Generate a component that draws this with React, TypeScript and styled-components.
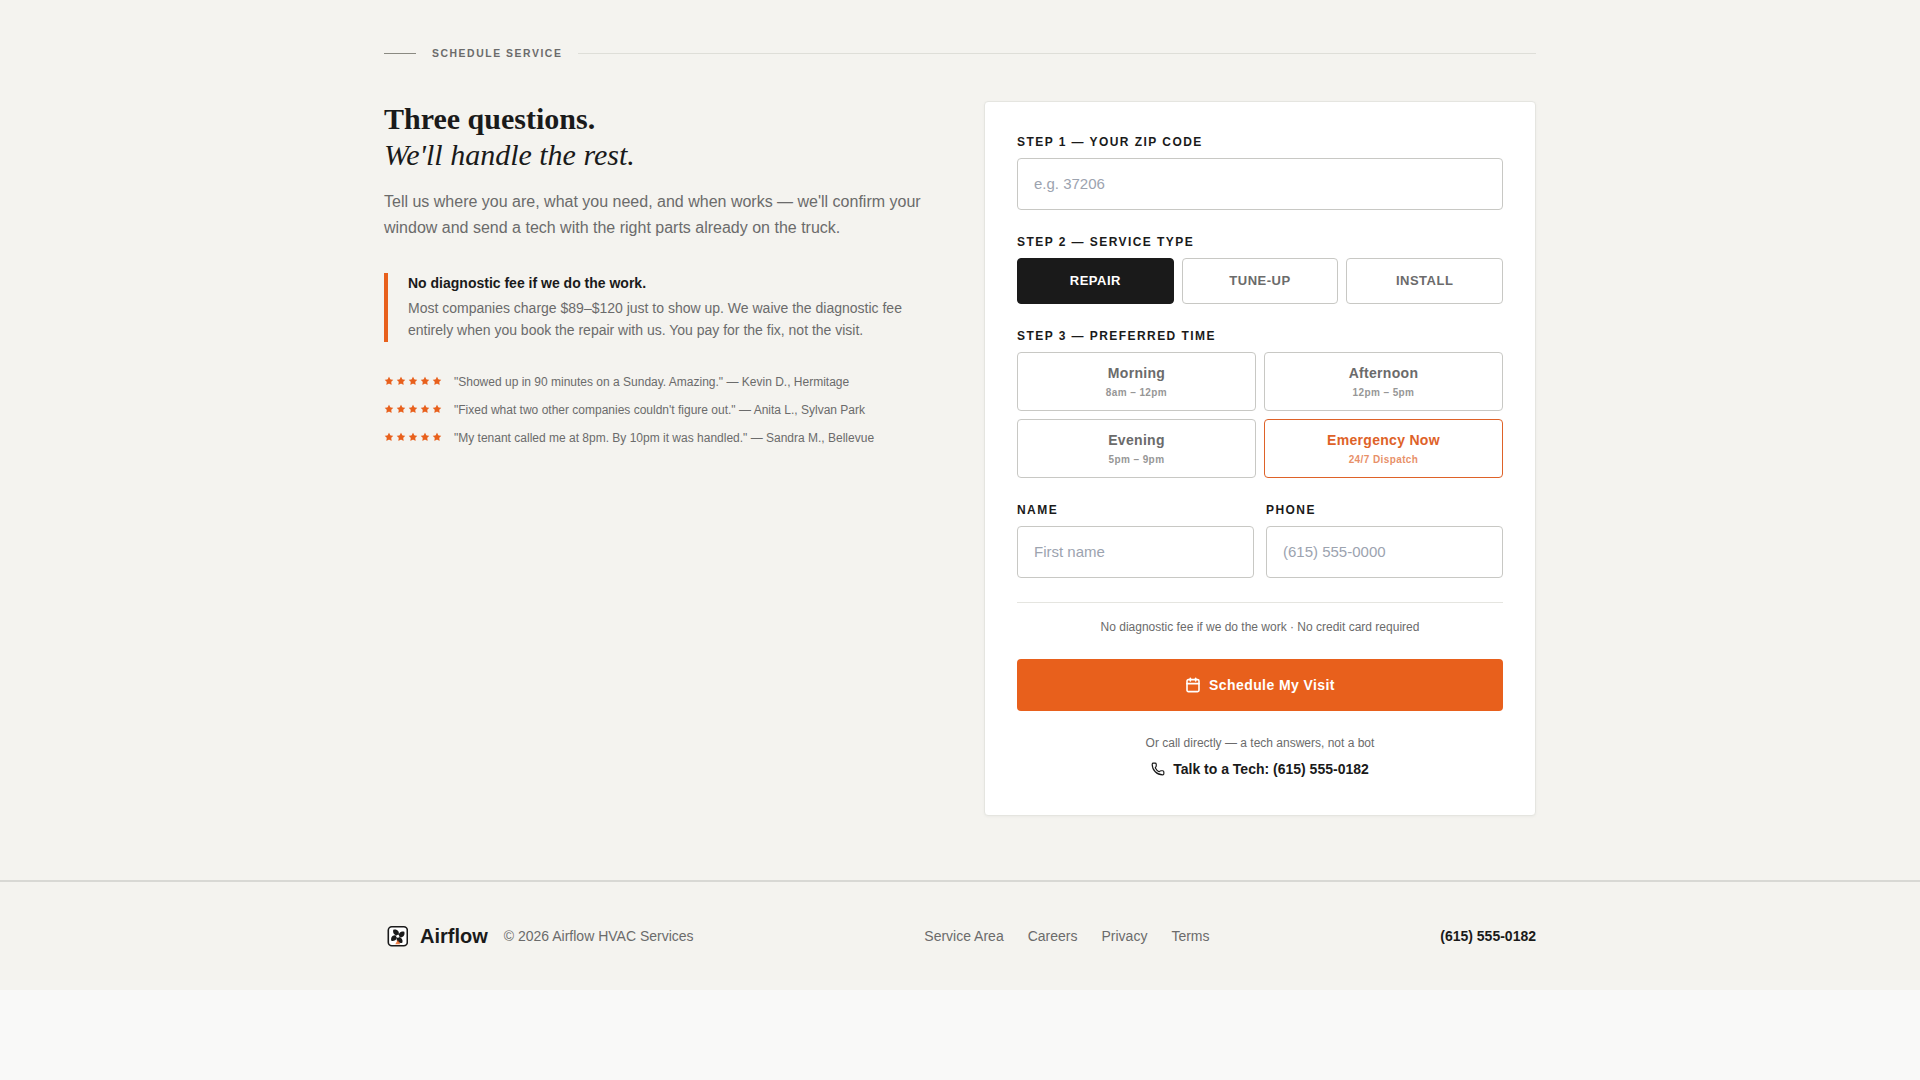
import React, { useState } from "react";
import styled, { createGlobalStyle } from "styled-components";
import { Calendar, Phone, Star } from "lucide-react";

const GlobalStyle = createGlobalStyle`
  * {
    box-sizing: border-box;
  }
  body {
    margin: 0;
    background: #f9f9f8;
    font-family: "Liberation Sans", Arial, sans-serif;
    color: #1a1a1a;
  }
`;

const Page = styled.div`
  background: #f4f3ef;
`;

const Section = styled.section`
  max-width: 1280px;
  margin: 0 auto;
  padding: 46px 64px 64px;
`;

const Eyebrow = styled.div`
  display: flex;
  align-items: center;
  gap: 16px;
  margin-bottom: 40px;
  font-size: 10.4px;
  font-weight: 700;
  letter-spacing: 1.56px;
  color: #6b6b6b;
  line-height: 15px;
  &::before {
    content: "";
    width: 32px;
    height: 1px;
    background: #8a8a82;
  }
  &::after {
    content: "";
    flex: 1;
    height: 1px;
    background: #deded8;
  }
`;

const Columns = styled.div`
  display: grid;
  grid-template-columns: 1fr 1fr;
  gap: 48px;
  align-items: start;
`;

const Heading = styled.h2`
  margin: 0 0 16px;
  font-family: "Liberation Serif", "Times New Roman", serif;
  font-size: 30px;
  font-weight: 700;
  line-height: 36px;
  color: #1a1a1a;
  em {
    display: block;
    font-weight: 400;
    font-style: italic;
  }
`;

const Lead = styled.p`
  margin: 0 0 32px;
  font-size: 16px;
  line-height: 26px;
  color: #6b6b6b;
`;

const Callout = styled.div`
  border-left: 4px solid #e8601c;
  padding: 0 0 1px 20px;
  margin-bottom: 32px;
`;

const CalloutTitle = styled.div`
  margin-bottom: 4px;
  font-size: 14px;
  font-weight: 700;
  line-height: 20px;
  color: #1a1a1a;
`;

const CalloutText = styled.p`
  margin: 0;
  font-size: 14px;
  line-height: 22px;
  color: #6b6b6b;
`;

const Reviews = styled.div`
  display: flex;
  flex-direction: column;
  gap: 12px;
`;

const Review = styled.div`
  display: flex;
  align-items: center;
  gap: 12px;
  font-size: 12px;
  line-height: 16px;
  color: #6b6b6b;
`;

const Stars = styled.span`
  display: flex;
  gap: 2px;
  margin-bottom: 2px;
  color: #e8601c;
`;

const Card = styled.form`
  background: #fff;
  border: 1px solid #e5e5e0;
  border-radius: 4px;
  padding: 32px;
  box-shadow: 0 1px 3px rgba(0, 0, 0, 0.04);
`;

const Step = styled.div`
  margin-bottom: 24px;
`;

const Label = styled.label`
  display: block;
  padding-top: 1px;
  margin-bottom: 9px;
  font-size: 12px;
  font-weight: 700;
  line-height: 14px;
  letter-spacing: 1.44px;
  color: #1a1a1a;
`;

const Input = styled.input`
  display: block;
  width: 100%;
  height: 52px;
  padding: 0 16px 2px;
  border: 1px solid #c8c8c4;
  border-radius: 4px;
  background: #fff;
  font-family: inherit;
  font-size: 15px;
  color: #1a1a1a;
  outline: none;
  &::placeholder {
    color: #9ca3af;
  }
`;

const ServiceRow = styled.div`
  display: grid;
  grid-template-columns: repeat(3, 1fr);
  gap: 8px;
`;

const ServiceButton = styled.button<{ $active?: boolean }>`
  height: 46px;
  padding: 0 0 2px;
  border: 1px solid ${({ $active }) => ($active ? "#1a1a1a" : "#c8c8c4")};
  border-radius: 4px;
  background: ${({ $active }) => ($active ? "#1a1a1a" : "#fff")};
  color: ${({ $active }) => ($active ? "#fff" : "#6b6b6b")};
  font-family: inherit;
  font-size: 13px;
  font-weight: 700;
  letter-spacing: 0.5px;
  cursor: pointer;
`;

const TimeGrid = styled.div`
  display: grid;
  grid-template-columns: 1fr 1fr;
  gap: 8px;
`;

const TimeButton = styled.button<{ $urgent?: boolean }>`
  display: flex;
  flex-direction: column;
  align-items: center;
  justify-content: center;
  gap: 4px;
  height: 59px;
  border: 1px solid ${({ $urgent }) => ($urgent ? "#de6228" : "#c8c8c4")};
  border-radius: 4px;
  background: #fff;
  color: ${({ $urgent }) => ($urgent ? "#de6228" : "#6b6b6b")};
  font-family: inherit;
  cursor: pointer;
`;

const TimeName = styled.span`
  font-size: 14px;
  font-weight: 700;
  line-height: 18px;
  letter-spacing: 0.3px;
`;

const TimeHours = styled.span`
  font-size: 10px;
  font-weight: 700;
  line-height: 14px;
  letter-spacing: 0.4px;
  opacity: 0.7;
`;

const ContactRow = styled.div`
  display: grid;
  grid-template-columns: 1fr 1fr;
  gap: 12px;
  padding-bottom: 24px;
  margin-bottom: 12px;
  border-bottom: 1px solid #e5e5e0;
`;

const Note = styled.p`
  margin: 0 0 20px;
  text-align: center;
  font-size: 12px;
  line-height: 24px;
  color: #6b6b6b;
`;

const Submit = styled.button`
  display: flex;
  align-items: center;
  justify-content: center;
  gap: 8px;
  width: 100%;
  height: 52px;
  border: none;
  border-radius: 4px;
  background: #e8601c;
  color: #fff;
  font-family: inherit;
  font-size: 14px;
  font-weight: 700;
  letter-spacing: 0.42px;
  cursor: pointer;
`;

const CallHint = styled.p`
  margin: 24px 0 0;
  text-align: center;
  font-size: 12px;
  line-height: 16px;
  color: #6b6b6b;
`;

const CallLink = styled.a`
  display: flex;
  align-items: center;
  justify-content: center;
  gap: 8px;
  margin-top: 9px;
  padding-bottom: 5px;
  font-size: 14px;
  font-weight: 700;
  line-height: 18px;
  color: #1a1a1a;
  text-decoration: none;
`;

const Footer = styled.footer`
  border-top: 2px solid #d8d8d4;
`;

const FooterInner = styled.div`
  display: flex;
  align-items: center;
  justify-content: space-between;
  max-width: 1280px;
  height: 108px;
  margin: 0 auto;
  padding: 0 64px;
`;

const Brand = styled.div`
  display: flex;
  align-items: center;
  gap: 16px;
`;

const LogoName = styled.div`
  display: flex;
  align-items: center;
  gap: 12px;
  font-size: 20px;
  font-weight: 700;
  color: #1a1a1a;
`;

const Copyright = styled.span`
  font-size: 14px;
  color: #6b6b6b;
`;

const FooterLinks = styled.nav`
  display: flex;
  gap: 24px;
`;

const FooterLink = styled.a`
  font-size: 14px;
  color: #6b6b6b;
  text-decoration: none;
`;

const FooterPhone = styled.a`
  font-size: 14px;
  font-weight: 700;
  color: #1a1a1a;
  text-decoration: none;
`;

const blade = "M12.500 11.500C9 11.500 6.500 9 7.500 5.500 11 4.500 14.500 7 12.500 11.500z";

const Logo = () => (
  <svg width="24" height="24" viewBox="0 0 24 24" aria-hidden="true">
    <rect x="4.300" y="2.800" width="19" height="19" rx="3.500" fill="#fff" stroke="#1a1a1a" strokeWidth="1.600" />
    <g transform="translate(1.800 0.300)" fill="#1a1a1a">
      {[0, 90, 180, 270].map((angle) => (
        <path key={angle} d={blade} transform={`rotate(${angle} 12 12)`} />
      ))}
      <circle cx="12" cy="12" r="1.500" fill="#fff" />
      <path d="M12 15.500l2.500 4.500h-5z" fill="#e8601c" opacity="0.8" />
    </g>
  </svg>
);

const services = ["REPAIR", "TUNE-UP", "INSTALL"];

const times = [
  { name: "Morning", hours: "8am – 12pm" },
  { name: "Afternoon", hours: "12pm – 5pm" },
  { name: "Evening", hours: "5pm – 9pm" },
  { name: "Emergency Now", hours: "24/7 Dispatch", urgent: true },
];

const reviews = [
  "\"Showed up in 90 minutes on a Sunday. Amazing.\" — Kevin D., Hermitage",
  "\"Fixed what two other companies couldn't figure out.\" — Anita L., Sylvan Park",
  "\"My tenant called me at 8pm. By 10pm it was handled.\" — Sandra M., Bellevue",
];

const App: React.FC = () => {
  const [service, setService] = useState("REPAIR");

  return (
    <Page>
      <GlobalStyle />
      <Section>
        <Eyebrow>SCHEDULE SERVICE</Eyebrow>
        <Columns>
          <div>
            <Heading>
              Three questions.
              <em>We'll handle the rest.</em>
            </Heading>
            <Lead>
              Tell us where you are, what you need, and when works — we'll confirm your window and
              send a tech with the right parts already on the truck.
            </Lead>
            <Callout>
              <CalloutTitle>No diagnostic fee if we do the work.</CalloutTitle>
              <CalloutText>
                Most companies charge $89–$120 just to show up. We waive the diagnostic fee entirely
                when you book the repair with us. You pay for the fix, not the visit.
              </CalloutText>
            </Callout>
            <Reviews>
              {reviews.map((text) => (
                <Review key={text}>
                  <Stars>
                    {[1, 2, 3, 4, 5].map((n) => (
                      <Star key={n} size={10} fill="currentColor" strokeWidth={0} />
                    ))}
                  </Stars>
                  <span>{text}</span>
                </Review>
              ))}
            </Reviews>
          </div>

          <Card onSubmit={(e) => e.preventDefault()}>
            <Step>
              <Label>STEP 1 — YOUR ZIP CODE</Label>
              <Input placeholder="e.g. 37206" />
            </Step>
            <Step>
              <Label>STEP 2 — SERVICE TYPE</Label>
              <ServiceRow>
                {services.map((s) => (
                  <ServiceButton
                    key={s}
                    type="button"
                    $active={service === s}
                    onClick={() => setService(s)}
                  >
                    {s}
                  </ServiceButton>
                ))}
              </ServiceRow>
            </Step>
            <Step>
              <Label>STEP 3 — PREFERRED TIME</Label>
              <TimeGrid>
                {times.map((t) => (
                  <TimeButton key={t.name} type="button" $urgent={t.urgent}>
                    <TimeName>{t.name}</TimeName>
                    <TimeHours>{t.hours}</TimeHours>
                  </TimeButton>
                ))}
              </TimeGrid>
            </Step>
            <ContactRow>
              <div>
                <Label>NAME</Label>
                <Input placeholder="First name" />
              </div>
              <div>
                <Label>PHONE</Label>
                <Input placeholder="(615) 555-0000" />
              </div>
            </ContactRow>
            <Note>No diagnostic fee if we do the work · No credit card required</Note>
            <Submit type="submit">
              <Calendar size={16} strokeWidth={2.4} />
              Schedule My Visit
            </Submit>
            <CallHint>Or call directly — a tech answers, not a bot</CallHint>
            <CallLink href="#">
              <Phone size={14} />
              Talk to a Tech: (615) 555-0182
            </CallLink>
          </Card>
        </Columns>
      </Section>
      <Footer>
        <FooterInner>
          <Brand>
            <LogoName>
              <Logo />
              Airflow
            </LogoName>
            <Copyright>© 2026 Airflow HVAC Services</Copyright>
          </Brand>
          <FooterLinks>
            <FooterLink href="#">Service Area</FooterLink>
            <FooterLink href="#">Careers</FooterLink>
            <FooterLink href="#">Privacy</FooterLink>
            <FooterLink href="#">Terms</FooterLink>
          </FooterLinks>
          <FooterPhone href="#">(615) 555-0182</FooterPhone>
        </FooterInner>
      </Footer>
    </Page>
  );
};

export default App;
